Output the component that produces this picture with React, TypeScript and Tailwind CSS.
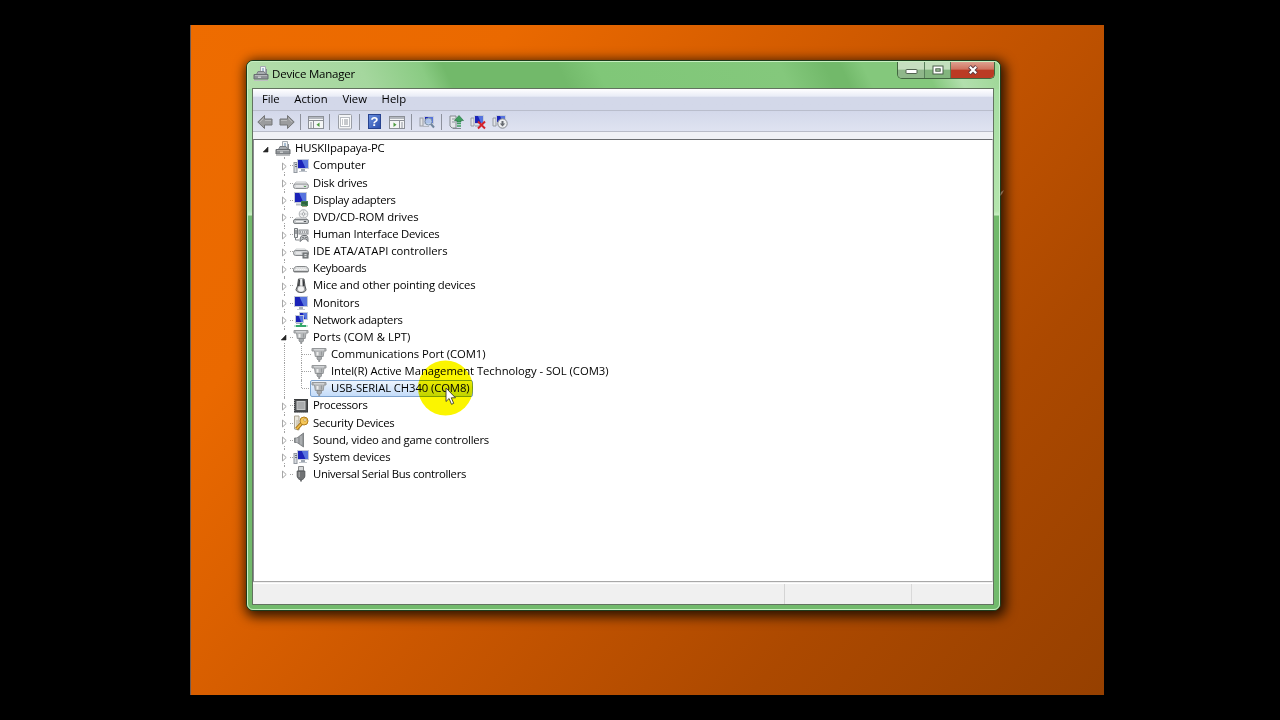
import { useLayoutEffect, useRef, type ReactNode } from "react";
import clsx from "clsx";

type IconName =
  | "root"
  | "computer"
  | "disk"
  | "display"
  | "dvd"
  | "hid"
  | "ide"
  | "keyboard"
  | "mouse"
  | "monitor"
  | "network"
  | "port"
  | "cpu"
  | "security"
  | "sound"
  | "usb";

type Device = {
  label: string;
  icon: IconName;
  width: number;
  level: 0 | 1 | 2;
  open?: boolean;
  selected?: boolean;
  last?: boolean;
};

const devices: Device[] = [
  { label: "HUSKIIpapaya-PC", icon: "root", width: 89, level: 0, open: true },
  { label: "Computer", icon: "computer", width: 52, level: 1 },
  { label: "Disk drives", icon: "disk", width: 54, level: 1 },
  { label: "Display adapters", icon: "display", width: 82, level: 1 },
  { label: "DVD/CD-ROM drives", icon: "dvd", width: 105, level: 1 },
  { label: "Human Interface Devices", icon: "hid", width: 126, level: 1 },
  { label: "IDE ATA/ATAPI controllers", icon: "ide", width: 134, level: 1 },
  { label: "Keyboards", icon: "keyboard", width: 53, level: 1 },
  { label: "Mice and other pointing devices", icon: "mouse", width: 162, level: 1 },
  { label: "Monitors", icon: "monitor", width: 46, level: 1 },
  { label: "Network adapters", icon: "network", width: 89, level: 1 },
  { label: "Ports (COM & LPT)", icon: "port", width: 97, level: 1, open: true },
  { label: "Communications Port (COM1)", icon: "port", width: 154, level: 2 },
  {
    label: "Intel(R) Active Management Technology - SOL (COM3)",
    icon: "port",
    width: 277,
    level: 2,
  },
  {
    label: "USB-SERIAL CH340 (COM8)",
    icon: "port",
    width: 138,
    level: 2,
    selected: true,
    last: true,
  },
  { label: "Processors", icon: "cpu", width: 54, level: 1 },
  { label: "Security Devices", icon: "security", width: 81, level: 1 },
  { label: "Sound, video and game controllers", icon: "sound", width: 175.5, level: 1 },
  { label: "System devices", icon: "computer", width: 77, level: 1 },
  { label: "Universal Serial Bus controllers", icon: "usb", width: 152.5, level: 1, last: true },
];

const menus = [
  { label: "File", width: 17 },
  { label: "Action", width: 33 },
  { label: "View", width: 24 },
  { label: "Help", width: 24 },
];

// Spreads the letters so that a label takes up exactly `width` pixels.
function FitText({ text, width }: { text: string; width: number }) {
  const ref = useRef<HTMLSpanElement>(null);

  useLayoutEffect(() => {
    const el = ref.current;
    if (!el) return;
    el.style.letterSpacing = "0px";
    const natural = el.getBoundingClientRect().width;
    el.style.letterSpacing = `${(width + 0.5 - natural) / text.length}px`;
  }, [text, width]);

  return (
    <span ref={ref} className="inline-block whitespace-pre">
      {text}
    </span>
  );
}

function Svg({ children, className }: { children: ReactNode; className?: string }) {
  return (
    <svg viewBox="0 0 16 16" className={clsx("size-4 shrink-0", className)} fill="none">
      {children}
    </svg>
  );
}

function Screen({ x, y, w, h }: { x: number; y: number; w: number; h: number }) {
  return (
    <>
      <rect x={x} y={y} width={w} height={h} fill="#c3cad8" />
      <rect x={x + 1} y={y + 1} width={w - 2} height={h - 2} fill="#1a22b8" />
      <path
        d={`M${x + w * 0.4} ${y + 1}H${x + w - 1}V${y + h - 1}H${x + w * 0.7}Z`}
        fill="#5673de"
      />
    </>
  );
}

function DeviceIcon({ name, className }: { name: IconName; className?: string }) {
  switch (name) {
    case "root":
      return (
        <Svg className={className}>
          <path d="M7.500.5h5V8h-5z" fill="#f3f5f6" stroke="#a4abb2" />
          <path d="M9 3h2M9 5h2" stroke="#5f86ad" />
          <path d="M13.500 3v6" stroke="#868c92" />
          <path d="M3.500 8.500l1.500-3h6l2 3z" fill="#a7abaf" stroke="#7b8085" />
          <path d="M1 8.500h14V13H1z" fill="#8f9397" stroke="#686c70" />
          <path d="M2 9.500h12" stroke="#b6b9bc" />
          <path d="M5 10.500h3v1.500H5z" fill="#c9cbcc" />
          <path d="M1 14.500h14" stroke="#bdbfc1" />
        </Svg>
      );
    case "computer":
      return (
        <Svg className={className}>
          <rect x="1" y="4.500" width="3" height="10" fill="#d7dade" stroke="#9298a0" />
          <path d="M2 6.500h2M2 8.500h2" stroke="#6b7178" />
          <Screen x={4} y={1} w={12} h={10} />
          <path d="M8 11h4v2H8z" fill="#9ea6b1" />
          <path d="M6 13.500h8" stroke="#c0c5cc" />
        </Svg>
      );
    case "disk":
      return (
        <Svg className={className}>
          <path d="M3 7h10l2 2.500H1z" fill="#f4f5f5" stroke="#c2c4c6" />
          <rect x=".5" y="9" width="15" height="4.500" rx="2" fill="#d5d7d9" stroke="#8b8e91" />
          <path d="M3 11h7" stroke="#f7f7f7" />
          <path d="M11 11.500h2" stroke="#5fa35f" />
        </Svg>
      );
    case "display":
      return (
        <Svg className={className}>
          <Screen x={1} y={0} w={13} h={11} />
          <path d="M3 12.500h5" stroke="#b8bdc5" strokeWidth="2" />
          <rect x="8" y="9" width="7" height="5" fill="#3f7d50" />
          <path d="M9 11h3M13 10v3" stroke="#1c4a2d" />
          <path d="M9 14.500h5" stroke="#a9a583" />
        </Svg>
      );
    case "dvd":
      return (
        <Svg className={className}>
          <circle cx="10.500" cy="5" r="4.300" fill="#eff0f1" stroke="#a9adb0" />
          <path d="M10.500 1v8M6.500 5h8" stroke="#cdd0d2" />
          <circle cx="10.500" cy="5" r="1.300" fill="#fff" stroke="#a3a7aa" />
          <path d="M3 9h10l2 2H1z" fill="#e3e5e7" stroke="#a4a7aa" strokeWidth=".7" />
          <rect x=".5" y="10.500" width="15" height="4" rx="1.500" fill="#c4c7c9" stroke="#7c8083" />
          <path d="M3 12.500h7" stroke="#f3f3f3" />
          <path d="M11 12.500h2" stroke="#54585b" />
        </Svg>
      );
    case "hid":
      return (
        <Svg className={className}>
          <path d="M1.500 1.500h3v9h-3z" fill="#e3e5e6" stroke="#74787c" />
          <path d="M3 3v4" stroke="#55595c" />
          <path d="M2.500 10v3h3.500" stroke="#85898d" />
          <rect x="6" y="3" width="9" height="4" fill="#dfe1e3" stroke="#85898d" />
          <path d="M7 5h7" stroke="#5d6165" strokeDasharray="1 1" />
          <path
            d="M7 14.500c0-4 1-6 3-6h3c2 0 2 3 2 6l-2-2.500h-3z"
            fill="#c0c3c6"
            stroke="#6c7074"
          />
          <path d="M9.500 10.500h1M12.500 10.500h1" stroke="#3b3f43" />
        </Svg>
      );
    case "ide":
      return (
        <Svg className={className}>
          <path d="M3 5h9l3 2.500H1z" fill="#f3f4f4" stroke="#bcbfc1" strokeWidth=".7" />
          <rect x=".5" y="6.500" width="15" height="5" rx="2.300" fill="#d2d4d6" stroke="#84878a" />
          <path d="M3 9h5" stroke="#f7f7f7" />
          <rect x="10" y="9" width="5" height="5" fill="#8b8f92" stroke="#64686b" />
          <path d="M11.500 10.500h2M11.500 12.500h2" stroke="#dadcdd" />
        </Svg>
      );
    case "keyboard":
      return (
        <Svg className={className}>
          <path
            d="M3.500 5.500h9c1.500 0 3 2 3 3v1.500c0 .8-.5 1-1 1h-13c-.5 0-1-.2-1-1V8.500c0-1 1.500-3 3-3z"
            fill="#d0d2d3"
            stroke="#85888a"
          />
          <path d="M3.500 7h9M2.500 8.500h11" stroke="#fff" strokeDasharray="1.300 .7" />
          <path d="M1 10.500h14" stroke="#77797b" />
        </Svg>
      );
    case "mouse":
      return (
        <Svg className={className}>
          <path
            d="M5.500 1h5.500l1 7 1 3.500c0 4-10 4-10 0L4.500 8z"
            fill="#a4a6a8"
            stroke="#515456"
          />
          <path d="M5.800 2h1.200l-.5 6h-1.500zM9.500 2h1.200l.8 6h-1.500z" fill="#37393b" />
          <path d="M7.200 1h2v6l-1 1-1-1z" fill="#f2f2f2" />
          <ellipse cx="8" cy="11" rx="3" ry="2.700" fill="#f4f4f4" />
        </Svg>
      );
    case "monitor":
      return (
        <Svg className={className}>
          <Screen x={1} y={1} w={14} h={11} />
          <path d="M6 12h4v2H6z" fill="#a9b0ba" />
          <path d="M4 14.500h8" stroke="#c3c8cf" />
        </Svg>
      );
    case "network":
      return (
        <Svg className={className}>
          <Screen x={6} y={0} w={9} h={8} />
          <Screen x={2} y={3} w={9} h={8} />
          <path d="M3 11.500h7" stroke="#aab1bb" />
          <path d="M8 11v3M3 14h10" stroke="#35a96b" strokeWidth="2.200" />
          <path d="M1 14h2M13 14h2" stroke="#a9d9be" strokeWidth="1.500" />
        </Svg>
      );
    case "port":
      return (
        <Svg className={className}>
          <path d="M1 1.500h14v2.500h-2l-.8 5.500H4.300L3.500 4H1z" fill="#b3b6b8" stroke="#96999b" />
          <path d="M3 2.800h10" stroke="#dfe0e1" />
          <path d="M5.500 5h2v3.500h-2z" fill="#eceded" />
          <path d="M10.500 4.500v4" stroke="#96999b" />
          <path d="M6 9.500h4.500V12l-1 1H7l-1-1z" fill="#a6a9ab" stroke="#808385" strokeWidth=".7" />
          <path d="M8.200 13v2" stroke="#97999b" strokeWidth="1.800" />
        </Svg>
      );
    case "cpu":
      return (
        <Svg className={className}>
          <rect x="1.500" y="1.500" width="13" height="12.500" fill="#4e5052" stroke="#3a3c3e" />
          <path d="M1.500 2v12M2 14.500h12" stroke="#8b8e90" strokeDasharray="1 1" />
          <rect x="4" y="3.500" width="8" height="8" fill="#a9abad" stroke="#c6c8c9" />
        </Svg>
      );
    case "security":
      return (
        <Svg className={className}>
          <path d="M1.500 1h4.500v14l-4.500-1z" fill="#ebe7dc" stroke="#aaa391" />
          <path d="M4 5v8" stroke="#bdb59f" />
          <path d="M9 8l-5.500 6" stroke="#a87416" strokeWidth="3.500" />
          <path d="M9 8l-5.500 6" stroke="#f0bd48" strokeWidth="1.800" />
          <circle cx="11" cy="6" r="4" fill="#f4c658" stroke="#b17d1d" />
          <circle cx="12" cy="5" r="1.300" fill="#fff6dd" stroke="#b17d1d" strokeWidth=".6" />
        </Svg>
      );
    case "sound":
      return (
        <Svg className={className}>
          <path d="M1.500 6h2.500l6.500-5v14L4 10.500H1.500z" fill="#96999c" stroke="#6e7275" strokeWidth=".8" />
          <path d="M4 6v4.500" stroke="#d1d3d5" />
          <path d="M8 4v8.500" stroke="#b9bcbe" strokeWidth="1.200" />
        </Svg>
      );
    case "usb":
      return (
        <Svg className={className}>
          <path d="M5.500.5h5V5h-5z" fill="#d6d8d9" stroke="#85878a" />
          <path d="M4.200 5h7.600v5c0 2-1.500 3-2.300 3.500h-3C5.700 13 4.200 12 4.200 10z" fill="#717375" stroke="#55585a" />
          <path d="M6.200 6v5" stroke="#b0b2b3" />
          <path d="M8 13v2.500" stroke="#66696b" strokeWidth="1.800" />
        </Svg>
      );
  }
}

function Expander({ open }: { open?: boolean }) {
  return (
    <svg viewBox="0 0 12 12" className="size-3 shrink-0">
      {open ? (
        <path d="M8 4v5H3.200z" fill="#262626" stroke="#262626" strokeWidth=".6" />
      ) : (
        <path d="M4.500 3v7l3.700-3.500z" fill="#fff" stroke="#a6a6a6" />
      )}
    </svg>
  );
}

function DeviceRow({ device }: { device: Device }) {
  const { level, selected, last } = device;

  return (
    <li
      className={clsx(
        "relative flex h-[17.150px] items-center",
        level === 0 && "pl-[6px]",
        level === 1 && "pl-6",
        level === 2 && "pl-[42px]"
      )}
    >
      {level > 0 && (
        <span
          className={clsx(
            "absolute left-[30px] top-0 border-l border-dotted border-[#a3a3a3]",
            last && level === 1 ? "h-[5px]" : "h-full"
          )}
        />
      )}
      {level === 2 && (
        <span
          className={clsx(
            "absolute left-[47px] top-0 border-l border-dotted border-[#a3a3a3]",
            last ? "h-2" : "h-full"
          )}
        />
      )}
      {level === 2 ? (
        <span className="ml-[6px] w-[9px] border-t border-dotted border-[#a3a3a3]" />
      ) : (
        <>
          <span className="relative grid bg-white">
            <Expander open={device.open} />
          </span>
          <span
            className={clsx(
              "w-[3px]",
              level === 1 && "border-t border-dotted border-[#a3a3a3]"
            )}
          />
        </>
      )}
      <span
        className={clsx(
          "relative -ml-px flex h-[17px] items-center border",
          selected
            ? "w-[163px] rounded-[2px] border-[#7da2ce] bg-linear-to-b from-[#edf4fd] to-[#c4dcf9]"
            : "border-transparent"
        )}
      >
        <DeviceIcon name={device.icon} />
        <span className="ml-1">
          <FitText text={device.label} width={device.width} />
        </span>
      </span>
    </li>
  );
}

function TitleBar() {
  return (
    <header className="flex h-[26px] items-start">
      <DeviceIcon name="root" className="ml-[5px] mt-1" />
      <h1 className="ml-[3px] mt-1 text-[11.500px] leading-4">
        <FitText text="Device Manager" width={82.5} />
      </h1>
      <div className="ml-auto mr-1 flex h-[17px] overflow-hidden rounded-b-[5px] border border-t-0 border-[#41663f]">
        <button
          type="button"
          aria-label="Minimize"
          className="grid w-[27px] place-items-center border-r border-[#58805a] bg-linear-to-b from-[#c6dfc0] from-45% to-[#8fb78a] to-50%"
        >
          <svg viewBox="0 0 13 10" className="h-[10px] w-[13px]">
            <rect x="1" y="4.500" width="11" height="4" rx=".5" fill="#fff" stroke="#51634f" />
          </svg>
        </button>
        <button
          type="button"
          aria-label="Maximize"
          className="grid w-[26px] place-items-center border-r border-[#58805a] bg-linear-to-b from-[#c2dfbc] from-45% to-[#83b57e] to-50%"
        >
          <svg viewBox="0 0 12 10" className="h-[10px] w-3">
            <rect x="1" y="1" width="10" height="8" fill="#fff" stroke="#4b604a" />
            <rect x="3.800" y="3.800" width="4.400" height="2.400" fill="#a5c9a0" stroke="#4b604a" />
          </svg>
        </button>
        <button
          type="button"
          aria-label="Close"
          className="grid w-[43px] place-items-center bg-linear-to-b from-[#dda08f] via-[#cf7460] via-45% to-[#bb3a24] to-50%"
        >
          <svg viewBox="0 0 12 10" className="h-[10px] w-3">
            <path d="M2.500 1.500l7 7M9.500 1.500l-7 7" stroke="#5f3a40" strokeWidth="4" />
            <path d="M2.800 1.800l6.400 6.400M9.200 1.800L2.800 8.200" stroke="#fff" strokeWidth="2.200" />
          </svg>
        </button>
      </div>
    </header>
  );
}

function Separator({ className }: { className?: string }) {
  return <span className={clsx("h-4 w-px bg-[#8d919c]", className)} />;
}

function PaneIcon({ flip }: { flip?: boolean }) {
  return (
    <Svg>
      <rect x=".5" y="2.500" width="15" height="12" fill="#f4f5f6" stroke="#8b8f96" />
      <path d="M1 4h14" stroke="#b3b7be" strokeWidth="2" />
      <path d="M1 6.500h14" stroke="#8b8f96" />
      <path d={flip ? "M10.500 7v7" : "M5.500 7v7"} stroke="#8b8f96" />
      <path
        d={flip ? "M12 9h2M12 11h2M12 13h2" : "M2 9h2M2 11h2M2 13h2"}
        stroke="#90959d"
      />
      <path d={flip ? "M4.500 8.500v4.500l3-2.250z" : "M11.500 8.500v4.500l-3-2.250z"} fill="#4c9b3f" />
    </Svg>
  );
}

function Toolbar() {
  return (
    <div className="flex h-[21px] items-center border-b border-[#b9bcc8] bg-linear-to-b from-[#d3d8ea] to-[#dfe3f1] pl-1 pt-px">
      <Svg>
        <path
          d="M.8 8L7.500 1.500v3.500H15v6H7.500V14.500z"
          fill="#9b9c9e"
          stroke="#747678"
          strokeLinejoin="round"
        />
        <path d="M3 8l3.500-3.500M8 6.500h6" stroke="#b9babc" />
      </Svg>
      <Svg className="ml-[6px]">
        <path
          d="M15.200 8L8.500 1.500v3.500H1v6h7.500V14.500z"
          fill="#9b9c9e"
          stroke="#747678"
          strokeLinejoin="round"
        />
        <path d="M13 8L9.500 4.500M8 6.500H2" stroke="#b9babc" />
      </Svg>
      <Separator className="ml-[5px] mr-[7px]" />
      <PaneIcon />
      <Separator className="ml-[5px] mr-[7px]" />
      <Svg>
        <rect x="1.500" y=".5" width="13" height="14.500" rx="1" fill="#f3f4f6" stroke="#9a9ea6" />
        <rect x="3.500" y="3.500" width="9" height="9" fill="#fff" stroke="#b9bdc3" />
        <path d="M5 6h1M7 6h4M5 8h1M7 8h4M5 10h1M7 10h4" stroke="#8e939a" />
      </Svg>
      <Separator className="ml-[6px] mr-2" />
      <span className="grid h-[15px] w-[13px] place-items-center border border-[#27428f] bg-linear-to-br from-[#6b8fdd] to-[#2c4fae] font-['Liberation_Sans'] text-[13px] leading-none font-bold text-white">
        ?
      </span>
      <span className="ml-2 grid">
        <PaneIcon flip />
      </span>
      <Separator className="ml-[6px] mr-[7px]" />
      <Svg>
        <rect x="1" y="4" width="3" height="8" fill="#e2e4e8" stroke="#989ca3" />
        <Screen x={5} y={2} w={10} h={8} />
        <path d="M4 12.500h6" stroke="#b3b8c0" />
        <circle cx="9.500" cy="7.500" r="3.500" fill="#bcd3ee" fillOpacity=".9" stroke="#7e92a6" />
        <path d="M12 10l3 3.500" stroke="#70859c" strokeWidth="2" />
      </Svg>
      <Separator className="ml-[6px] mr-[6px]" />
      <Svg>
        <path d="M2 2h6v12H4l-2-2z" fill="#e4e7ea" stroke="#858a91" />
        <path d="M4 5h3M4 8h3" stroke="#8d939b" />
        <path d="M5 14.500h8" stroke="#858a91" />
        <path d="M11 1.500l4.500 5H13v1.500H9V6.500H6.500z" fill="#3f9d5f" stroke="#27733f" strokeWidth=".6" />
        <path d="M9 9.500h4M9 12h4" stroke="#3f9d5f" strokeWidth="1.500" />
      </Svg>
      <Svg className="ml-[6px]">
        <path d="M1 4h3v8H1z" fill="#e2e4e8" stroke="#989ca3" />
        <Screen x={4} y={1} w={10} h={9} />
        <path d="M5 12h5" stroke="#a8aeb7" strokeWidth="1.500" />
        <path d="M8 7.500l7 7M15 7.500l-7 7" stroke="#d3222b" strokeWidth="2" />
      </Svg>
      <Svg className="ml-[6px]">
        <path d="M1 4h3v8H1z" fill="#e2e4e8" stroke="#989ca3" />
        <Screen x={4} y={1} w={10} h={8} />
        <circle cx="10.500" cy="9.500" r="4.700" fill="#eceef0" stroke="#85898f" />
        <path d="M10.500 7v4" stroke="#666a70" strokeWidth="2" />
        <path d="M7.800 9.500h5.400l-2.700 3z" fill="#666a70" />
      </Svg>
    </div>
  );
}

function Highlight() {
  return (
    <svg
      viewBox="0 0 56 58"
      className="absolute left-[164px] top-[219px] h-[58px] w-14 mix-blend-multiply"
    >
      <circle cx="27.500" cy="29" r="27.500" fill="#fbf500" />
    </svg>
  );
}

function Cursor() {
  return (
    <svg viewBox="0 0 12 19" className="absolute left-[191px] top-[247px] h-[19px] w-3">
      <path
        d="M1 1v13.500l3.100-3 2.400 5.800 2.200-1-2.400-5.500h4.200z"
        fill="#fff"
        stroke="#3a3a20"
        strokeWidth=".9"
      />
    </svg>
  );
}

export default function App() {
  return (
    <main className="h-[720px] w-[1280px] overflow-hidden bg-black pl-[190px] pt-[25px] font-['Open_Sans','Noto_Sans',sans-serif] text-[11.300px] text-black">
      <div className="h-[670px] w-[914px] border-l border-[#6d5a55] bg-[linear-gradient(130deg,#ee6c00_0%,#ea6900_22%,#cb5700_50%,#ac4900_76%,#964000_100%)] pl-[55px] pt-[35px]">
        <div className="relative flex h-[551px] w-[755px] flex-col rounded-[7px] border border-[#1e3a1b] bg-[#72ba6c] bg-[linear-gradient(#a3dc9f,#b4e5ad_150px,#c9eec3_154px,#72ba6c_155px,#72ba6c)] shadow-[2px_3px_12px_3px_rgba(0,0,0,0.75)]">
          <div className="flex grow flex-col rounded-[6px] border border-[#c8f0c3] bg-[linear-gradient(65deg,#b4deac_0%,#a5d79e_16%,#8acb83_24%,#72b96a_27%,#72b96a_42%,#80c778_47%,#84c87c_71%,#72b96a_77%,#72b96a_79%,#84c87c_82%,#84c87c_90%,#b2dfad_94%,#9cd694_100%)] bg-size-[100%_27px] bg-no-repeat">
            <TitleBar />
            <div className="ml-[4px] mr-[5px] flex h-[517px] flex-col border border-[#62725f] bg-[#f0f0f0]">
              <nav className="flex h-[22px] items-center border-b border-[#b9bdcc] bg-linear-to-b from-white via-[#e9ecf6] via-34% to-[#d3d8e9] to-40% pl-[9px]">
                {menus.map((menu) => (
                  <span key={menu.label} className="mr-[14.700px]">
                    <FitText text={menu.label} width={menu.width} />
                  </span>
                ))}
              </nav>
              <Toolbar />
              <div className="h-[7px] bg-[#f0f1f5]" />
              <ul className="relative h-[443px] shrink-0 border border-r-[#dcdcdc] border-b-[#a8a8a8] border-l-[#8b8d92] border-t-[#6b6d70] bg-white pt-[0.250px]">
                {devices.map((device) => (
                  <DeviceRow key={device.label} device={device} />
                ))}
                <Highlight />
                <Cursor />
              </ul>
              <footer className="mt-px flex grow border-t border-white">
                <span className="w-[532px] border-r border-[#d4d4d4]" />
                <span className="w-[127px] border-r border-[#d9d9d9]" />
              </footer>
            </div>
          </div>
          <svg viewBox="0 0 6 8" className="absolute -right-[5px] top-[128px] h-2 w-[6px]">
            <path d="M1 7l1-4 3-2-2 4z" fill="#a08a78" opacity=".7" />
          </svg>
        </div>
      </div>
    </main>
  );
}
